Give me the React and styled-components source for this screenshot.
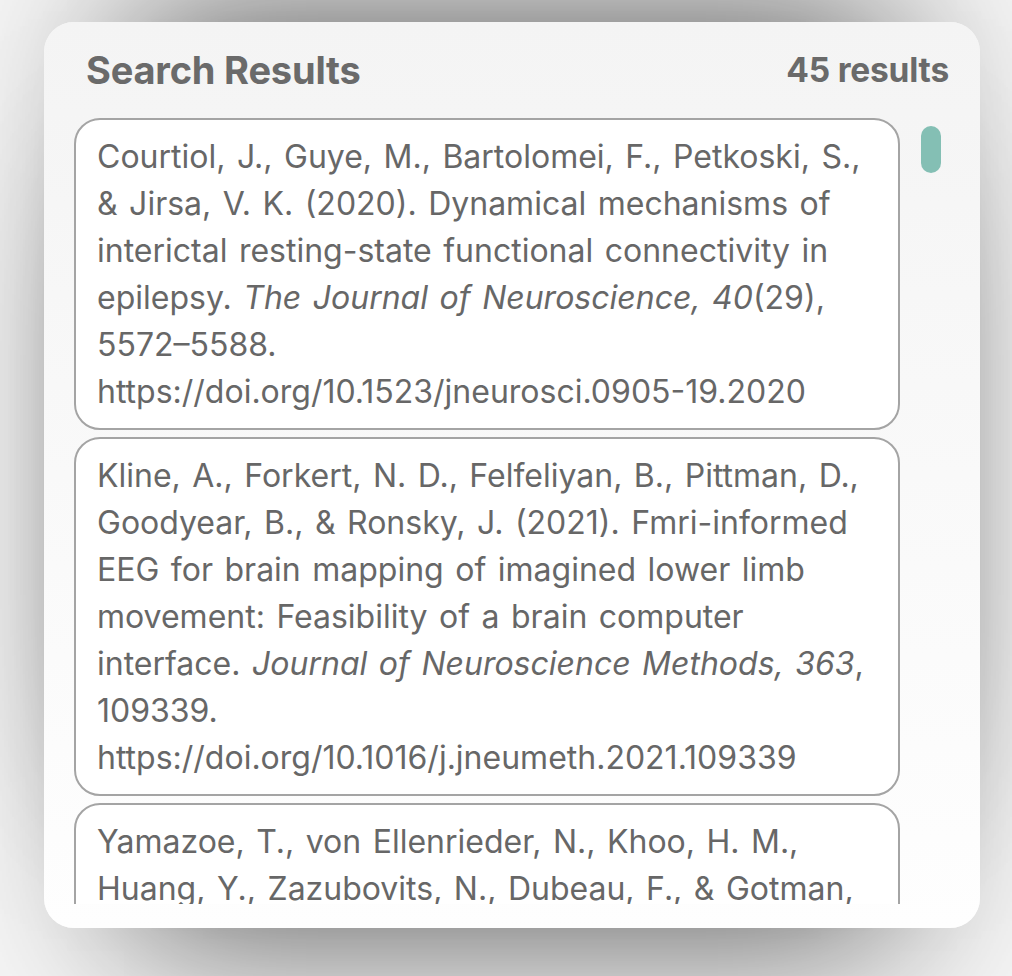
import React from 'react';
import styled, { createGlobalStyle } from 'styled-components';

const GlobalStyle = createGlobalStyle`
  html, body {
    margin: 0;
    padding: 0;
    background: #f6f6f6;
  }
  body {
    font-family: Inter, "Liberation Sans", sans-serif;
  }
`;

const Page = styled.div`
  width: 1012px;
  height: 976px;
  padding: 22px 32px 0 44px;
  box-sizing: border-box;
  overflow: hidden;
  background: #f6f6f6;
`;

const Card = styled.section`
  width: 936px;
  height: 906px;
  box-sizing: border-box;
  padding: 0 31px 24px 30px;
  border-radius: 30px;
  background: linear-gradient(#f4f4f4, #fefefe);
  box-shadow:
    0 -91px 160px -80px rgba(0, 0, 0, 0.62),
    0 91px 160px -80px rgba(0, 0, 0, 0.62);
  display: flex;
  flex-direction: column;
`;

const Header = styled.header`
  height: 96px;
  flex: none;
  display: flex;
  align-items: center;
  justify-content: space-between;
  padding: 0 0 0 12px;
  color: #6a6a6a;
  font-weight: 700;
`;

const Title = styled.h2`
  margin: 0;
  font-size: 38px;
  font-weight: 700;
  letter-spacing: -0.2px;
`;

const Count = styled.span`
  font-size: 33.5px;
  letter-spacing: -0.2px;
`;

const Body = styled.div`
  flex: 1;
  min-height: 0;
  display: flex;
  gap: 21px;
`;

const List = styled.ul`
  list-style: none;
  margin: 0;
  padding: 0;
  flex: 1;
  overflow: hidden;
  display: flex;
  flex-direction: column;
  gap: 7px;
`;

const Item = styled.li`
  flex: none;
  background: #fff;
  border: 2px solid #a4a4a4;
  border-radius: 26px;
  padding: 13px 21px;
  font-size: 32px;
  line-height: 47px;
  word-spacing: 2.5px;
  color: #676767;
`;

const Doi = styled.span`
  display: block;
  white-space: nowrap;
  word-spacing: 0;
`;

const Track = styled.div`
  width: 28px;
  flex: none;
  padding-top: 8px;
`;

const Thumb = styled.div`
  width: 20px;
  height: 47px;
  border-radius: 10px;
  background: #84bfb4;
`;

const results = [
  {
    authors: 'Courtiol, J., Guye, M., Bartolomei, F., Petkoski, S., & Jirsa, V. K. (2020). Dynamical mechanisms of interictal resting-state functional connectivity in epilepsy.',
    journal: 'The Journal of Neuroscience, 40',
    rest: '(29), 5572–5588.',
    doi: 'https://doi.org/10.1523/jneurosci.0905-19.2020',
  },
  {
    authors: 'Kline, A., Forkert, N. D., Felfeliyan, B., Pittman, D., Goodyear, B., & Ronsky, J. (2021). Fmri-informed EEG for brain mapping of imagined lower limb movement: Feasibility of a brain computer interface.',
    journal: 'Journal of Neuroscience Methods, 363',
    rest: ', 109339.',
    doi: 'https://doi.org/10.1016/j.jneumeth.2021.109339',
  },
  {
    authors: 'Yamazoe, T., von Ellenrieder, N., Khoo, H. M., Huang, Y., Zazubovits, N., Dubeau, F., & Gotman, J. (2019). Propagation of interictal epileptic discharges in children with epilepsy.',
    journal: 'Epilepsia, 60',
    rest: '(9), 1890–1901.',
    doi: 'https://doi.org/10.1111/epi.16310',
  },
];

const Citation = ({ entry }) => (
  <Item>
    {entry.authors} <i>{entry.journal}</i>{entry.rest}
    <Doi>{entry.doi}</Doi>
  </Item>
);

export default function App() {
  return (
    <Page>
      <GlobalStyle />
      <Card>
        <Header>
          <Title>Search Results</Title>
          <Count>45 results</Count>
        </Header>
        <Body>
          <List>
            {results.map((entry) => (
              <Citation key={entry.doi} entry={entry} />
            ))}
          </List>
          <Track>
            <Thumb />
          </Track>
        </Body>
      </Card>
    </Page>
  );
}
